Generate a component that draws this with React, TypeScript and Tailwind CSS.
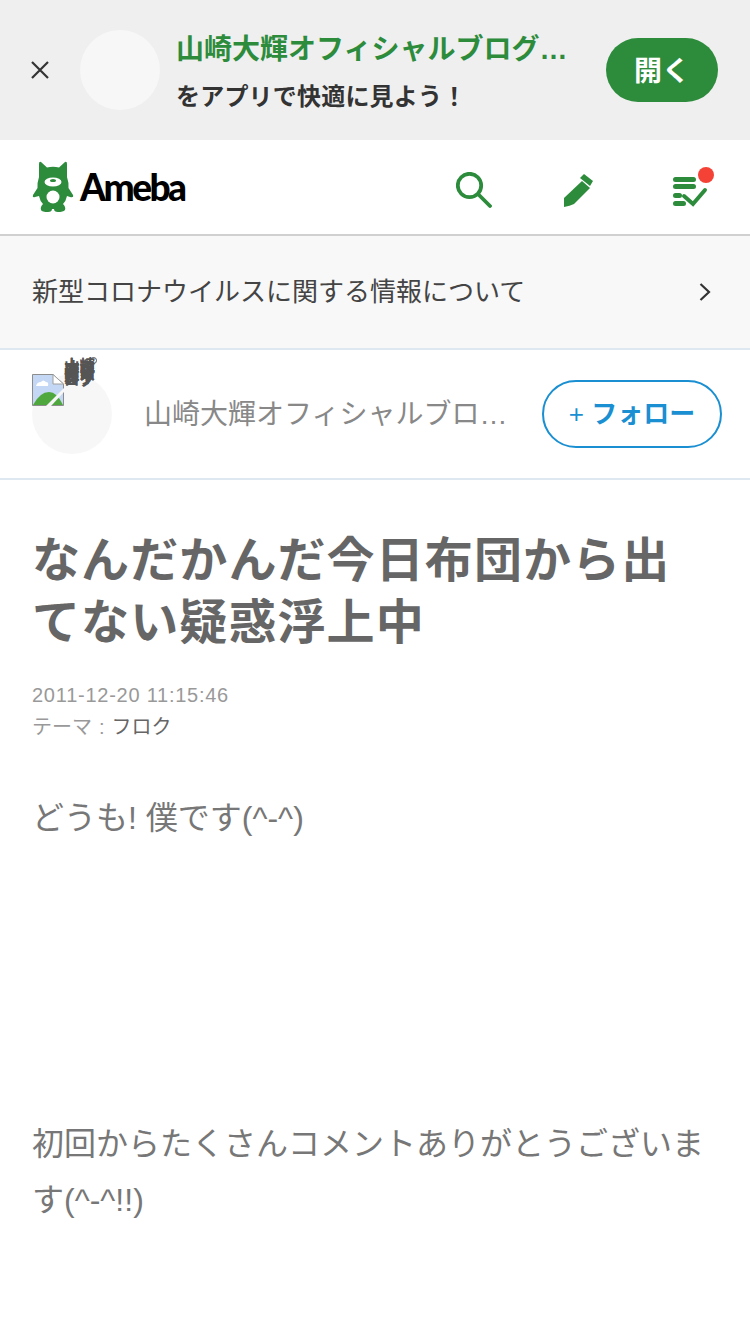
import React from "react";

const jp = "font-['Liberation_Sans','Noto_Sans_CJK_JP',sans-serif]";

function AmebaMark() {
  return (
    <svg width="42" height="52" viewBox="0 0 42 52" fill="#2d8c3c">
      <path d="M9 1 L15 6.500 Q21 5 27 6.500 L33 1 Q35 0 35 3 L35 16 Q37 22 36.500 27 L41 34 Q42 37 38 36 L35 35 Q34 40 31 43 Q34 46 33 49 Q31 51 26 51 Q22 51 22 48 L20 48 Q20 51 16 51 Q10 51 9 49 Q8 46 11 43 Q8 40 7 35 L3 36 Q0 37 1 34 L5.500 27 Q5 22 7 16 L7 3 Q7 0 9 1 Z" />
      <ellipse cx="21" cy="21" rx="8.500" ry="4.500" fill="#fff" />
      <ellipse cx="21" cy="19.500" rx="3" ry="1.600" fill="#2d8c3c" />
      <circle cx="21" cy="36" r="6.500" fill="#fff" />
    </svg>
  );
}

function BrokenImage() {
  return (
    <svg width="32" height="32" viewBox="0 0 32 32">
      <path d="M0.500 0.500 H21 L31.500 10 V31.500 H0.500 Z" fill="#c4d7f5" stroke="#8d8d8d" />
      <path d="M21 0.500 V10 H31.500 Z" fill="#fff" stroke="#a0a0a0" />
      <path d="M4 12 Q5 8 9 8 Q11 5 14 8 Q17 8 16 12 Z" fill="#fff" />
      <path d="M1 31 Q8 18 17 18 Q25 18 31 31 Z" fill="#4fa83d" />
      <path d="M14 32 L32 14 V18 L19 32 Z" fill="#f7f7f7" />
    </svg>
  );
}

export default function App() {
  return (
    <div className={`w-[750px] min-h-[1334px] bg-white overflow-hidden ${jp}`}>
      <div className="h-[140px] bg-[#efefef] flex items-center pr-[32px]">
        <button className="w-[80px] h-[140px] flex items-center justify-center shrink-0">
          <svg width="20" height="20" viewBox="0 0 20 20" stroke="#333" strokeWidth="2.200" fill="none">
            <path d="M2 2 L18 18 M18 2 L2 18" />
          </svg>
        </button>
        <div className="w-[80px] h-[80px] rounded-full bg-[#f7f7f7] shrink-0" />
        <div className="ml-[16px] w-[396px] pt-[7px] shrink-0">
          <p className="text-[28px] leading-[36px] font-bold text-[#2d8c3c] whitespace-nowrap">山崎大輝オフィシャルブログ…</p>
          <p className="mt-[11px] text-[24px] leading-[36px] font-bold text-[#333] tracking-[0.2px]">をアプリで快適に見よう！</p>
        </div>
        <button className="ml-auto w-[112px] h-[64px] pt-[3px] rounded-full bg-[#2d8c3c] text-white text-[28px] font-bold shrink-0">開く</button>
      </div>

      <div className="h-[96px] border-b-2 border-[#d0d0d0] flex items-center pl-[32px]">
        <AmebaMark />
        <span className="ml-[6px] text-[37px] font-['Lato',sans-serif] font-black text-black tracking-[-2.5px]">Ameba</span>
        <div className="ml-auto mr-[36px] h-[41px] flex items-end">
          <svg width="36" height="36" viewBox="0 0 36 36" fill="none" stroke="#2d8c3c" strokeWidth="3.800" strokeLinecap="round">
            <circle cx="13.500" cy="13.500" r="11.700" />
            <path d="M23 23 L34 34" />
          </svg>
          <svg className="ml-[72px]" width="30" height="34" viewBox="0 0 30 34" fill="#2d8c3c">
            <path d="M0 24 L18 7 L26 14 L10 30 Q6 32 0 33 Z" />
            <path d="M20 0 L29 7 L26 12 L16 4 Z" />
          </svg>
          <div className="relative ml-[79px] w-[41px] h-[41px]">
            <svg width="36" height="32" viewBox="0 0 36 32" className="absolute left-0 top-[10px]" fill="none" stroke="#2d8c3c" strokeWidth="5" strokeLinecap="round">
              <path d="M2.500 2.500 H20.500 M2.500 9.500 H20.500 M2.500 18.500 H6.500 M2.500 26.500 H10.500" />
              <path d="M11 19 L20 27 L32 13" strokeWidth="4" />
            </svg>
            <span className="absolute left-[25px] top-0 w-[16px] h-[16px] rounded-full bg-[#f44336]" />
          </div>
        </div>
      </div>

      <div className="h-[114px] bg-[#f8f8f8] border-b-2 border-[#dde8f0] flex items-center pl-[32px] pr-[39px]">
        <span className="text-[26px] text-[#444]">新型コロナウイルスに関する情報について</span>
        <svg className="ml-auto" width="12" height="20" viewBox="0 0 12 20" fill="none" stroke="#333" strokeWidth="2.200">
          <path d="M1.500 2 L10 10 L1.500 18" />
        </svg>
      </div>

      <div className="h-[130px] border-b-2 border-[#dde8f0] flex items-center pl-[32px] pr-[28px] relative">
        <div className="w-[80px] h-[80px] rounded-full bg-[#f7f7f7] shrink-0" />
        <div className="absolute left-[32px] top-[24px]">
          <BrokenImage />
        </div>
        <span className="absolute left-[64px] top-[15px] w-[32px] text-[15.500px] leading-[1.200px] font-bold text-[#555] break-all">
          山崎大輝オフィシャルブログ山崎大輝オフィシャルブログ
        </span>
        <span className="absolute left-[90px] top-[7px] w-[7px] h-[7px] rounded-full border border-[#555]" />
        <span className="ml-[32px] mt-[2px] text-[28px] text-[#888] w-[366px] truncate">山崎大輝オフィシャルブロ…</span>
        <button className="ml-auto w-[180px] h-[68px] rounded-full border-2 border-[#1a8fd1] bg-white text-[#1a8fd1] text-[26px] font-bold shrink-0">
          <span className="font-normal">+</span> フォロー
        </button>
      </div>

      <div className="px-[32px] pt-[50px]">
        <h1 className="text-[48px] leading-[62px] font-bold text-[#666] tracking-[1.1px]">なんだかんだ今日布団から出てない疑惑浮上中</h1>
        <p className="mt-[25px] text-[20px] leading-[32px] text-[#999] tracking-[0.75px]">2011-12-20 11:15:46</p>
        <p className="text-[20px] leading-[32px] text-[#999]">
          テーマ<span className="mx-[7px]">:</span><span className="text-[#666]">フロク</span>
        </p>
        <p className="mt-[47px] text-[32px] leading-[56px] text-[#777]">どうも! 僕です(^-^)</p>
        <p className="mt-[270px] text-[32px] leading-[56px] text-[#777]">初回からたくさんコメントありがとうございます(^-^!!)</p>
      </div>
    </div>
  );
}
